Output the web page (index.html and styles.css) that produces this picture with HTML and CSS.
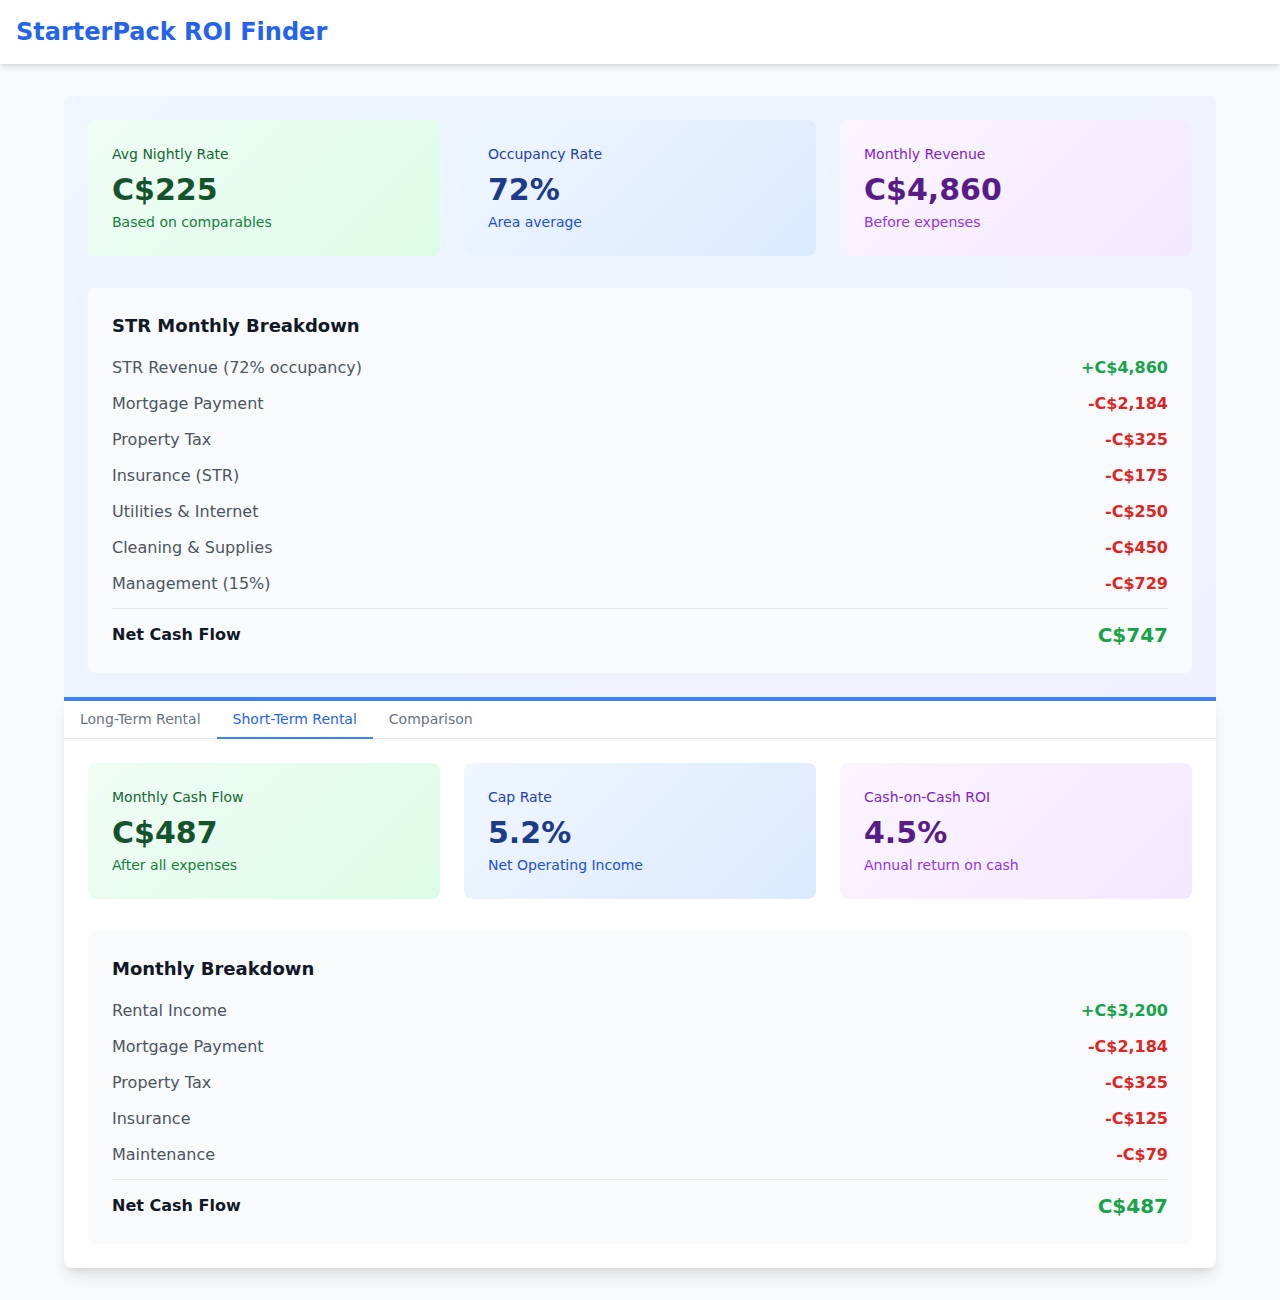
FILE: index.html
```html
<!DOCTYPE html>
<html lang="en">
<head>
<meta charset="utf-8">
<title>StarterPack ROI Finder</title>
<link rel="stylesheet" href="styles.css">
</head>
<body>
<header class="topbar">
  <h1 class="brand">StarterPack ROI Finder</h1>
</header>
<main class="page">
  <section class="str-panel">
    <div class="stats">
      <div class="stat stat-green">
        <div class="stat-label">Avg Nightly Rate</div>
        <div class="stat-value">C$225</div>
        <div class="stat-sub">Based on comparables</div>
      </div>
      <div class="stat stat-blue">
        <div class="stat-label">Occupancy Rate</div>
        <div class="stat-value">72%</div>
        <div class="stat-sub">Area average</div>
      </div>
      <div class="stat stat-purple">
        <div class="stat-label">Monthly Revenue</div>
        <div class="stat-value">C$4,860</div>
        <div class="stat-sub">Before expenses</div>
      </div>
    </div>
    <div class="breakdown">
      <h3 class="breakdown-title">STR Monthly Breakdown</h3>
      <div class="rows">
        <div class="row"><span>STR Revenue (72% occupancy)</span><span class="amt pos">+C$4,860</span></div>
        <div class="row"><span>Mortgage Payment</span><span class="amt neg">-C$2,184</span></div>
        <div class="row"><span>Property Tax</span><span class="amt neg">-C$325</span></div>
        <div class="row"><span>Insurance (STR)</span><span class="amt neg">-C$175</span></div>
        <div class="row"><span>Utilities &amp; Internet</span><span class="amt neg">-C$250</span></div>
        <div class="row"><span>Cleaning &amp; Supplies</span><span class="amt neg">-C$450</span></div>
        <div class="row"><span>Management (15%)</span><span class="amt neg">-C$729</span></div>
      </div>
      <div class="net">
        <span class="net-label">Net Cash Flow</span>
        <span class="net-value">C$747</span>
      </div>
    </div>
  </section>

  <section class="card">
    <nav class="tabs">
      <button class="tab">Long-Term Rental</button>
      <button class="tab tab-active">Short-Term Rental</button>
      <button class="tab">Comparison</button>
    </nav>
    <div class="tab-body">
      <div class="stats">
        <div class="stat stat-green">
          <div class="stat-label">Monthly Cash Flow</div>
          <div class="stat-value">C$487</div>
          <div class="stat-sub">After all expenses</div>
        </div>
        <div class="stat stat-blue">
          <div class="stat-label">Cap Rate</div>
          <div class="stat-value">5.2%</div>
          <div class="stat-sub">Net Operating Income</div>
        </div>
        <div class="stat stat-purple">
          <div class="stat-label">Cash-on-Cash ROI</div>
          <div class="stat-value">4.5%</div>
          <div class="stat-sub">Annual return on cash</div>
        </div>
      </div>
      <div class="breakdown">
        <h3 class="breakdown-title">Monthly Breakdown</h3>
        <div class="rows">
          <div class="row"><span>Rental Income</span><span class="amt pos">+C$3,200</span></div>
          <div class="row"><span>Mortgage Payment</span><span class="amt neg">-C$2,184</span></div>
          <div class="row"><span>Property Tax</span><span class="amt neg">-C$325</span></div>
          <div class="row"><span>Insurance</span><span class="amt neg">-C$125</span></div>
          <div class="row"><span>Maintenance</span><span class="amt neg">-C$79</span></div>
        </div>
        <div class="net">
          <span class="net-label">Net Cash Flow</span>
          <span class="net-value">C$487</span>
        </div>
      </div>
    </div>
  </section>
</main>
</body>
</html>
```

FILE: styles.css
```css
* { box-sizing: border-box; }

html, body {
  margin: 0;
  padding: 0;
}

body {
  font-family: "DejaVu Sans", "Noto Sans", sans-serif;
  background: #f8f9fb;
  color: #111827;
  min-height: 1300px;
}

.topbar {
  background: #ffffff;
  height: 64px;
  padding: 0 16px;
  display: flex;
  align-items: center;
  box-shadow: 0 4px 6px -1px rgba(0,0,0,0.1), 0 2px 4px -2px rgba(0,0,0,0.1);
  position: relative;
  z-index: 1;
}

.brand {
  margin: 0;
  font-size: 24px;
  line-height: 32px;
  font-weight: 700;
  color: #2563eb;
}

.page {
  width: 1152px;
  margin: 32px auto 0;
}

.str-panel {
  background: linear-gradient(135deg, #eff6ff 0%, #eef2ff 100%);
  border-radius: 8px 8px 0 0;
  padding: 24px 24px 24px;
  border-bottom: 4px solid #3b82f6;
}

.stats {
  display: grid;
  grid-template-columns: repeat(3, 1fr);
  gap: 24px;
}

.stat {
  border-radius: 8px;
  padding: 24px;
  height: 136px;
}

.stat-label {
  font-size: 14px;
  line-height: 20px;
  margin-bottom: 8px;
}

.stat-value {
  font-size: 30px;
  line-height: 36px;
  font-weight: 700;
}

.stat-sub {
  font-size: 14px;
  line-height: 20px;
  margin-top: 4px;
}

.stat-green { background: linear-gradient(135deg, #f0fdf4 0%, #dcfce7 100%); }
.stat-green .stat-label { color: #166534; }
.stat-green .stat-value { color: #14532d; }
.stat-green .stat-sub { color: #15803d; }

.stat-blue { background: linear-gradient(135deg, #eff6ff 0%, #dbeafe 100%); }
.stat-blue .stat-label { color: #1e40af; }
.stat-blue .stat-value { color: #1e3a8a; }
.stat-blue .stat-sub { color: #1d4ed8; }

.stat-purple { background: linear-gradient(135deg, #faf5ff 0%, #f3e8ff 100%); }
.stat-purple .stat-label { color: #7e22ce; }
.stat-purple .stat-value { color: #581c87; }
.stat-purple .stat-sub { color: #9333ea; }

.breakdown {
  margin-top: 32px;
  background: #f9fafb;
  border-radius: 8px;
  padding: 24px;
}

.breakdown-title {
  margin: 0 0 16px;
  font-size: 18px;
  line-height: 28px;
  font-weight: 700;
  color: #111827;
}

.rows {
  display: flex;
  flex-direction: column;
  gap: 12px;
}

.row {
  display: flex;
  justify-content: space-between;
  font-size: 16px;
  line-height: 24px;
  color: #4b5563;
}

.amt { font-weight: 700; }
.pos { color: #16a34a; }
.neg { color: #dc2626; }

.net {
  margin-top: 12px;
  border-top: 1px solid #e5e7eb;
  padding-top: 12px;
  display: flex;
  justify-content: space-between;
  align-items: center;
  line-height: 28px;
}

.net-label {
  font-size: 16px;
  font-weight: 700;
  color: #111827;
}

.net-value {
  font-size: 20px;
  font-weight: 700;
  color: #16a34a;
}

.card {
  background: #ffffff;
  border-radius: 0 0 8px 8px;
  box-shadow: 0 10px 15px -3px rgba(0,0,0,0.1), 0 4px 6px -4px rgba(0,0,0,0.1);
}

.tabs {
  display: flex;
  border-bottom: 1px solid #e5e7eb;
}

.tab {
  font-family: inherit;
  background: none;
  border: none;
  border-bottom: 2px solid transparent;
  margin-bottom: -1px;
  padding: 8px 16px;
  font-size: 14px;
  line-height: 20px;
  color: #6b7280;
  cursor: pointer;
}

.tab-active {
  color: #2563eb;
  border-bottom-color: #3b82f6;
}

.tab-body {
  padding: 24px;
}
```
